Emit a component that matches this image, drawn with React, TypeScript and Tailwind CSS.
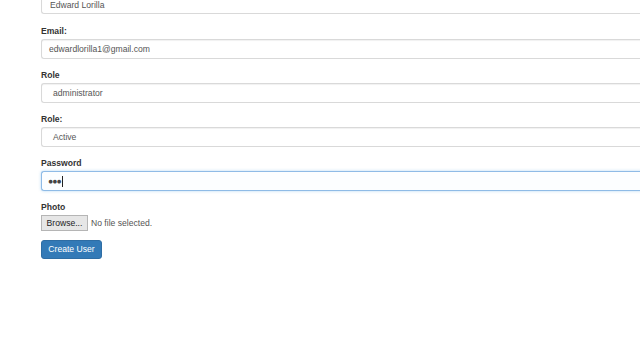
import { useState } from "react";

const inputCls =
  "block h-[20px] w-[620px] rounded-l-[3px] border border-r-0 border-[#d9d9d9] bg-white text-[8.6px] text-[#555] shadow-[inset_0_1px_1px_rgba(0,0,0,0.06)] outline-none";

function Field({ label, children }: { label: string; children: React.ReactNode }) {
  return (
    <div className="mb-[9px]">
      <label className="mb-[2px] block h-[13px] pt-[1px] text-[8.6px] font-bold leading-[13px] text-[#333]">
        {label}
      </label>
      {children}
    </div>
  );
}

export default function App() {
  const [name] = useState("Edward Lorilla");
  const [email] = useState("edwardlorilla1@gmail.com");

  return (
    <div
      className="h-[360px] w-[640px] overflow-hidden bg-white pl-[41px]"
      style={{ fontFamily: '"Liberation Sans", Arial, sans-serif' }}
    >
      <div className="-mt-[6px] mb-[10px]">
        <div className={inputCls + " flex items-center pl-[8px] pt-[2px]"}>{name}</div>
      </div>

      <Field label="Email:">
        <div className={inputCls + " flex items-center pl-[7px]"}>{email}</div>
      </Field>

      <Field label="Role">
        <div className={inputCls + " flex items-center pl-[11px]"}>administrator</div>
      </Field>

      <Field label="Role:">
        <div className={inputCls + " flex items-center pl-[11px]"}>Active</div>
      </Field>

      <Field label="Password">
        <div className="flex h-[20px] w-[620px] items-center rounded-l-[3px] border border-r-0 border-[#8fbbe6] bg-[#fcfeff] pl-[6px] text-[8.6px] text-[#555] shadow-[0_0_3px_rgba(102,175,233,0.5)]">
          <span className="tracking-[-1px] text-[#444]">●●●</span>
          <span className="ml-[1px] h-[11px] w-px bg-[#222]" />
        </div>
      </Field>

      <Field label="Photo">
        <div className="mt-[1px] flex items-center text-[8.6px] text-[#555]">
          <span className="flex h-[16px] w-[47px] items-center justify-center border border-[#b5b5b5] bg-[#e6e6e6] text-[#222]">
            Browse...
          </span>
          <span className="ml-[3px]">No file selected.</span>
        </div>
      </Field>

      <button className="mt-[1px] flex h-[19px] w-[61px] items-center justify-center rounded-[3px] border border-[#2e6da4] bg-[#337ab7] text-[8.6px] text-white">
        Create User
      </button>
    </div>
  );
}
